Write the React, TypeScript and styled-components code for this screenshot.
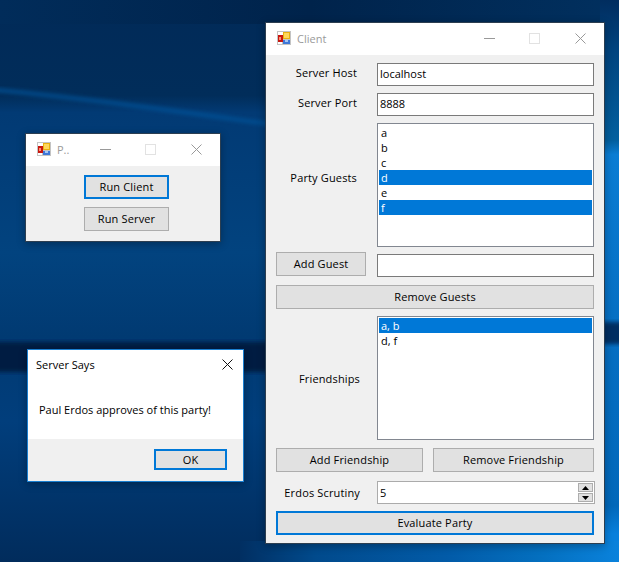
import React from "react";
import styled, { createGlobalStyle } from "styled-components";

const Global = createGlobalStyle`
  html, body { margin: 0; padding: 0; width: 619px; height: 562px; overflow: hidden; background: #012b5a; }
  * { box-sizing: border-box; }
  body { font-family: "Open Sans", "Noto Sans", "Liberation Sans", sans-serif; font-size: 11px; color: #000; }
`;

const Desktop = styled.div`
  position: relative;
  width: 619px;
  height: 562px;
  overflow: hidden;
`;

const Wallpaper = styled.svg`
  position: absolute;
  left: 0;
  top: 0;
`;

const Win = styled.section<{ $x: number; $y: number; $w: number; $h: number; $accent?: boolean }>`
  position: absolute;
  left: ${(p) => p.$x}px;
  top: ${(p) => p.$y}px;
  width: ${(p) => p.$w}px;
  height: ${(p) => p.$h}px;
  display: flex;
  flex-direction: column;
  background: #f0f0f0;
  border: 1px solid ${(p) => (p.$accent ? "#1a7fd0" : "#2c3e50")};
  box-shadow: 0 2px 8px rgba(0, 0, 0, 0.3);
`;

const TitleBar = styled.header`
  height: 32px;
  flex: none;
  background: #fff;
  display: flex;
  align-items: center;
  padding-left: 11px;
`;

const AppIcon = styled.svg`
  width: 14px;
  height: 14px;
  flex: none;
  margin-top: -2px;
`;

const Title = styled.span`
  margin-left: 6px;
  margin-top: -1px;
  color: #9a9a9a;
`;

const Caption = styled.div`
  margin-left: auto;
  margin-right: 18px;
  margin-top: -2px;
  display: flex;
  align-items: center;
`;

const CaptionIcon = styled.svg<{ $gap?: number }>`
  width: 11px;
  height: 11px;
  margin-left: ${(p) => p.$gap ?? 0}px;
  flex: none;
`;

const Btn = styled.button<{ $primary?: boolean; $w?: number; $top?: number }>`
  display: block;
  width: ${(p) => (p.$w ? `${p.$w}px` : "100%")};
  height: 24px;
  margin-top: ${(p) => p.$top ?? 0}px;
  padding: 0 0 1px;
  background: #e1e1e1;
  border: ${(p) => (p.$primary ? "2px solid #0078d7" : "1px solid #adadad")};
  font: inherit;
  letter-spacing: 0.15px;
  color: #000;
  flex: none;
`;

const MiniBody = styled.div`
  flex: 1;
  display: flex;
  flex-direction: column;
  gap: 8px;
  padding: 9px 0 0 58px;
`;

const DialogHead = styled.header`
  height: 29px;
  flex: none;
  background: #fff;
  display: flex;
  align-items: center;
  justify-content: space-between;
  padding: 0 10px 0 8px;
`;

const DialogTitle = styled.span`
  color: #000;
`;

const Message = styled.div`
  height: 60px;
  flex: none;
  background: #fff;
  padding: 23px 0 0 11px;
`;

const DialogFoot = styled.footer`
  flex: 1;
  display: flex;
  justify-content: flex-end;
  padding: 10px 16px 0 0;
`;

const OkBtn = styled(Btn)`
  height: 21px;
`;

const Form = styled.div`
  flex: 1;
  display: flex;
  flex-direction: column;
  padding: 8px 10px 0;
`;

const Row = styled.div<{ $top?: number }>`
  display: grid;
  grid-template-columns: 84px 17px 217px;
  align-items: center;
  margin-top: ${(p) => p.$top ?? 0}px;
`;

const Label = styled.label<{ $right?: number; $up?: number }>`
  grid-column: 1;
  text-align: right;
  white-space: nowrap;
  letter-spacing: 0.15px;
  padding-right: ${(p) => p.$right ?? 0}px;
  margin-top: ${(p) => -(p.$up ?? 0)}px;
`;

const Field = styled.div<{ $top?: number }>`
  grid-column: 3;
  height: 23px;
  margin-top: ${(p) => p.$top ?? 0}px;
  background: #fff;
  border: 1px solid #7a7a7a;
  padding: 0 2px 2px;
  display: flex;
  align-items: center;
`;

const ListBox = styled.div`
  grid-column: 3;
  height: 124px;
  background: #fff;
  border: 1px solid #828790;
  padding: 1px;
`;

const Item = styled.div<{ $on?: boolean }>`
  height: 15px;
  line-height: 15px;
  padding-left: 2px;
  background: ${(p) => (p.$on ? "#0078d7" : "transparent")};
  color: ${(p) => (p.$on ? "#fff" : "#000")};
`;

const AddRow = styled.div`
  display: grid;
  grid-template-columns: 90px 11px 217px;
  margin-top: 5px;
`;

const PairRow = styled.div`
  display: grid;
  grid-template-columns: 147px 161px;
  justify-content: space-between;
  margin-top: 8px;
`;

const Spin = styled.div`
  grid-column: 3;
  width: 218px;
  height: 23px;
  background: #fff;
  border: 1px solid #ababab;
  padding-left: 2px;
  display: flex;
  align-items: center;
  justify-content: space-between;
`;

const SpinBox = styled.div`
  width: 15px;
  height: 19px;
  margin-right: 1px;
  display: flex;
  flex-direction: column;
  gap: 1px;
`;

const SpinBtn = styled.div`
  flex: 1;
  background: #e1e1e1;
  border: 1px solid #adadad;
  display: flex;
  align-items: center;
  justify-content: center;
`;

const Arrow = styled.svg`
  width: 7px;
  height: 4px;
`;

const Icon = () => (
  <AppIcon viewBox="0 0 14 14" shapeRendering="crispEdges">
    <rect x="0" y="0" width="14" height="14" fill="#c4c4c4" />
    <rect x="1" y="1" width="5" height="3" fill="#fff" />
    <rect x="1" y="11" width="4" height="2" fill="#fff" />
    <rect x="1" y="4" width="5" height="7" fill="#c8160f" />
    <rect x="2" y="6" width="2" height="3" fill="#ff8f70" />
    <rect x="6" y="1" width="7" height="7" fill="#e8b010" />
    <rect x="7" y="2" width="5" height="5" fill="#ffd75a" />
    <rect x="6" y="9" width="7" height="4" fill="#3f78d8" />
    <rect x="8" y="9" width="3" height="2" fill="#a8c8f4" />
  </AppIcon>
);

const WinControls = () => (
  <Caption>
    <CaptionIcon viewBox="0 0 11 11" shapeRendering="crispEdges">
      <rect x="0" y="5" width="11" height="1" fill="#999" />
    </CaptionIcon>
    <CaptionIcon viewBox="0 0 11 11" $gap={34} shapeRendering="crispEdges">
      <rect x="0.5" y="0.5" width="10" height="10" fill="none" stroke="#e2e2e2" />
    </CaptionIcon>
    <CaptionIcon viewBox="0 0 11 11" $gap={35}>
      <path d="M0.5 0.5L10.5 10.5M10.5 0.5L0.5 10.5" stroke="#999" strokeWidth="1" />
    </CaptionIcon>
  </Caption>
);

const Wall = () => (
  <Wallpaper width="619" height="562" viewBox="0 0 619 562">
    <defs>
      <linearGradient id="left" x1="0" y1="0" x2="0" y2="1">
        <stop offset="0" stopColor="#012a58" />
        <stop offset="0.17" stopColor="#012d5a" />
        <stop offset="0.2" stopColor="#023a74" />
        <stop offset="0.45" stopColor="#02437f" />
        <stop offset="0.6" stopColor="#013a72" />
        <stop offset="0.75" stopColor="#013e7c" />
        <stop offset="1" stopColor="#012c5c" />
      </linearGradient>
      <linearGradient id="top" x1="0" y1="0" x2="1" y2="0">
        <stop offset="0" stopColor="#012c5a" />
        <stop offset="0.5" stopColor="#00234b" />
        <stop offset="1" stopColor="#01305f" />
      </linearGradient>
      <linearGradient id="right" x1="0" y1="0" x2="0" y2="1">
        <stop offset="0" stopColor="#012d5f" />
        <stop offset="0.09" stopColor="#01447f" />
        <stop offset="0.25" stopColor="#03609f" />
        <stop offset="0.275" stopColor="#0a7dd4" />
        <stop offset="0.55" stopColor="#0670c4" />
        <stop offset="0.9" stopColor="#0268ba" />
        <stop offset="0.95" stopColor="#0880dc" />
        <stop offset="1" stopColor="#0880dc" />
      </linearGradient>
      <linearGradient id="bottom" x1="0" y1="0" x2="1" y2="0">
        <stop offset="0" stopColor="#012f62" />
        <stop offset="0.2" stopColor="#014a8c" />
        <stop offset="0.55" stopColor="#025ba8" />
        <stop offset="0.8" stopColor="#0470c0" />
        <stop offset="1" stopColor="#0a82dc" />
      </linearGradient>
      <filter id="soft"><feGaussianBlur stdDeviation="2" /></filter>
    </defs>
    <rect width="619" height="562" fill="url(#left)" />
    <rect width="619" height="24" fill="url(#top)" />
    <rect x="600" width="19" height="562" fill="url(#right)" />
    <path d="M-5 90C90 98 180 112 270 124" stroke="#07559c" strokeWidth="3" fill="none" filter="url(#soft)" />
    <rect x="-5" y="342" width="275" height="30" fill="#011f42" filter="url(#soft)" />
    <rect x="600" y="322" width="25" height="22" fill="#012f62" filter="url(#soft)" />
    <rect x="240" y="541" width="379" height="21" fill="url(#bottom)" />
  </Wallpaper>
);

export default function App() {
  return (
    <Desktop>
      <Global />
      <Wall />

      <Win $x={25} $y={133} $w={196} $h={109}>
        <TitleBar>
          <Icon />
          <Title>P..</Title>
          <WinControls />
        </TitleBar>
        <MiniBody>
          <Btn $primary $w={85}>Run Client</Btn>
          <Btn $w={85}>Run Server</Btn>
        </MiniBody>
      </Win>

      <Win $x={27} $y={349} $w={217} $h={133} $accent>
        <DialogHead>
          <DialogTitle>Server Says</DialogTitle>
          <CaptionIcon viewBox="0 0 11 11">
            <path d="M0.5 0.5L10.5 10.5M10.5 0.5L0.5 10.5" stroke="#111" strokeWidth="1" />
          </CaptionIcon>
        </DialogHead>
        <Message>Paul Erdos approves of this party!</Message>
        <DialogFoot>
          <OkBtn $primary $w={73}>OK</OkBtn>
        </DialogFoot>
      </Win>

      <Win $x={265} $y={22} $w={340} $h={522}>
        <TitleBar>
          <Icon />
          <Title>Client</Title>
          <WinControls />
        </TitleBar>
        <Form>
          <Row>
            <Label $right={3} $up={5}>Server Host</Label>
            <Field>localhost</Field>
          </Row>
          <Row $top={7}>
            <Label $right={3} $up={5}>Server Port</Label>
            <Field>8888</Field>
          </Row>
          <Row $top={7}>
            <Label $right={3} $up={16}>Party Guests</Label>
            <ListBox>
              <Item>a</Item>
              <Item>b</Item>
              <Item>c</Item>
              <Item $on>d</Item>
              <Item>e</Item>
              <Item $on>f</Item>
            </ListBox>
          </Row>
          <AddRow>
            <Btn>Add Guest</Btn>
            <Field $top={2} />
          </AddRow>
          <Btn $top={8}>Remove Guests</Btn>
          <Row $top={7}>
            <Label>Friendships</Label>
            <ListBox>
              <Item $on>a, b</Item>
              <Item>d, f</Item>
            </ListBox>
          </Row>
          <PairRow>
            <Btn>Add Friendship</Btn>
            <Btn>Remove Friendship</Btn>
          </PairRow>
          <Row $top={9}>
            <Label>Erdos Scrutiny</Label>
            <Spin>
              5
              <SpinBox>
                <SpinBtn>
                  <Arrow viewBox="0 0 7 4"><path d="M3.5 0L7 4H0Z" fill="#000" /></Arrow>
                </SpinBtn>
                <SpinBtn>
                  <Arrow viewBox="0 0 7 4"><path d="M0 0H7L3.5 4Z" fill="#000" /></Arrow>
                </SpinBtn>
              </SpinBox>
            </Spin>
          </Row>
          <Btn $primary $top={7}>Evaluate Party</Btn>
        </Form>
      </Win>
    </Desktop>
  );
}
